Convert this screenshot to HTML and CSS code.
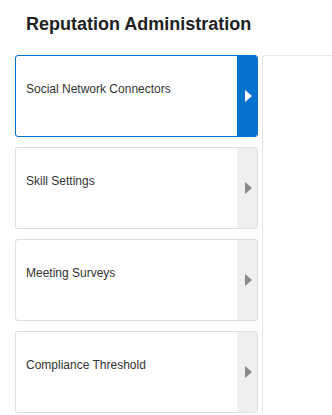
FILE: index.html
```html
<!DOCTYPE html>
<html lang="en">
<head>
    <meta charset="UTF-8">
    <meta name="viewport" content="width=device-width, initial-scale=1.0">
    <title>Reputation Administration</title>
    <link rel="stylesheet" href="styles.css">
</head>
<body>

    <h1 class="title">Reputation Administration</h1>

    <div class="main">
        <div class="cards">
            <div class="card active">
                <div class="label">Social Network Connectors</div>
                <div class="strip"><span class="arrow"></span></div>
            </div>
            <div class="card">
                <div class="label">Skill Settings</div>
                <div class="strip"><span class="arrow"></span></div>
            </div>
            <div class="card">
                <div class="label">Meeting Surveys</div>
                <div class="strip"><span class="arrow"></span></div>
            </div>
            <div class="card">
                <div class="label">Compliance Threshold</div>
                <div class="strip"><span class="arrow"></span></div>
            </div>
        </div>
        <div class="panel"></div>
    </div>

</body>
</html>
```

FILE: styles.css
```css
body {
    margin: 0;
    font-family: "Liberation Sans", Arial, sans-serif;
    background-color: white;
    color: #333;
}
.title {
    margin: 0;
    padding: 14px 0 0 26px;
    font-size: 18px;
    line-height: 21px;
    font-weight: bold;
    color: #1f1f1f;
}
.main {
    display: flex;
    gap: 4px;
    margin-top: 20px;
    padding-left: 15px;
}
.cards {
    width: 243px;
    flex-shrink: 0;
}
.card {
    display: flex;
    box-sizing: border-box;
    height: 82px;
    margin-bottom: 10px;
    border: 1px solid #d9e0e5;
    border-radius: 3px;
    background: white;
}
.card:last-child {
    margin-bottom: 0;
}
.label {
    flex: 1;
    padding: 26px 0 0 10px;
    font-size: 12px;
    line-height: 14px;
    color: #333;
}
.strip {
    width: 20px;
    display: flex;
    align-items: center;
    justify-content: center;
    background-color: #efefef;
    border-radius: 0 2px 2px 0;
}
.arrow {
    width: 0;
    height: 0;
    margin-left: 2px;
    border-top: 6px solid transparent;
    border-bottom: 6px solid transparent;
    border-left: 7px solid #8a8a8a;
}
.card.active {
    border-color: #0572ce;
}
.card.active .strip {
    background-color: #0572ce;
}
.card.active .arrow {
    border-left-color: white;
}
.panel {
    flex: 1;
    border-top: 1px solid #e6e6e6;
    border-left: 1px solid #e6e6e6;
    border-radius: 3px 0 0 0;
}
```
